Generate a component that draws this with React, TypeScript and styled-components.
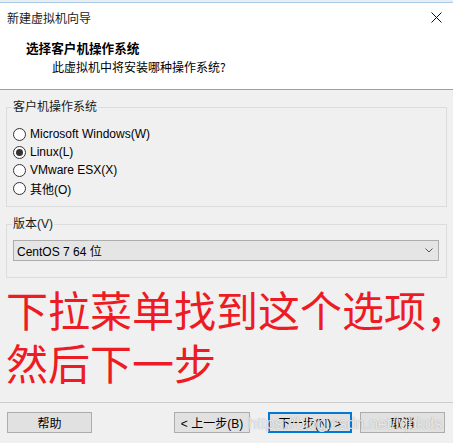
import React from 'react';
import styled, {createGlobalStyle} from 'styled-components';

const GlobalStyle = createGlobalStyle`
  html, body {
    margin: 0;
    padding: 0;
    background: #ffffff;
  }
  body {
    font-family: "Liberation Sans", "Noto Sans CJK SC", sans-serif;
    font-size: 12px;
    color: #000000;
  }
`;

const osOptions = [
  {label: 'Microsoft Windows(W)', checked: false},
  {label: 'Linux(L)', checked: true},
  {label: 'VMware ESX(X)', checked: false},
  {label: '其他(O)', checked: false},
];

export default function App() {
  return (
    <>
      <GlobalStyle/>
      <Window>
        <TopStrip/>
        <TitleBar>
          <TitleText>新建虚拟机向导</TitleText>
          <CloseButton>
            <svg width='11' height='11' viewBox='0 0 11 11'>
              <path d='M0.5 0.5 L10.5 10.5 M10.5 0.5 L0.5 10.5' stroke='#111' strokeWidth='1' fill='none'/>
            </svg>
          </CloseButton>
        </TitleBar>
        <Header>
          <HeaderTitle>选择客户机操作系统</HeaderTitle>
          <HeaderSub>此虚拟机中将安装哪种操作系统?</HeaderSub>
        </Header>
        <Content>
          <Group $pt={11} $pb={9}>
            <Legend>客户机操作系统</Legend>
            {osOptions.map((o) => (
              <RadioRow key={o.label}>
                <Radio $checked={o.checked}/>
                <span>{o.label}</span>
              </RadioRow>
            ))}
          </Group>
          <Group $pt={9} $pb={16}>
            <Legend>版本(V)</Legend>
            <Select>
              <span>CentOS 7 64 位</span>
              <svg width='8' height='5' viewBox='0 0 8 5'>
                <path d='M0.5 0.5 L4 4 L7.5 0.5' stroke='#555' strokeWidth='1' fill='none'/>
              </svg>
            </Select>
          </Group>
          <Note>
            <NoteLine>下拉菜单找到这个选项<Punct>，</Punct></NoteLine>
            <NoteLine>然后下一步</NoteLine>
          </Note>
        </Content>
        <Footer>
          <Button $w={85}>帮助</Button>
          <Spacer/>
          <Button $w={76}>&lt; 上一步(B)</Button>
          <Button $w={84} $primary style={{marginLeft: 18}}>下一步(N) &gt;</Button>
          <Button $w={85} style={{marginLeft: 8}}>取消</Button>
          <Watermark>https://blog.csdn.net/lqbkds</Watermark>
        </Footer>
      </Window>
    </>
  );
}

const Window = styled.div`
  width: 453px;
  height: 443px;
  background: #f0f0f0;
  display: flex;
  flex-direction: column;
`;

const TopStrip = styled.div`
  height: 2px;
  background: #e9eef3;
  border-bottom: 1px solid #a9c9e6;
`;

const TitleBar = styled.div`
  height: 30px;
  background: #ffffff;
  display: flex;
  align-items: center;
  padding: 0 11px 0 7px;
`;

const TitleText = styled.div`
  flex: 1;
  font-family: "Noto Sans CJK SC", sans-serif;
  font-size: 12px;
  color: #1a1a1a;
  line-height: 16px;
`;

const CloseButton = styled.div`
  display: flex;
  margin-top: -1px;
`;

const Header = styled.div`
  background: #ffffff;
  padding: 7px 0 14px 26px;
  border-bottom: 1px solid #a0a0a0;
  box-sizing: border-box;
  height: 57px;
`;

const HeaderTitle = styled.div`
  font-family: "Noto Sans CJK SC", sans-serif;
  font-weight: bold;
  font-size: 12.6px;
  line-height: 16px;
`;

const HeaderSub = styled.div`
  font-family: "Noto Sans CJK SC", sans-serif;
  font-size: 12px;
  line-height: 16px;
  margin: 3px 0 0 26px;
`;

const Content = styled.div`
  padding: 0 6px;
  display: flex;
  flex-direction: column;
`;

const Group = styled.fieldset<{$pt: number; $pb: number}>`
  margin: 10px 0 0 0;
  padding: ${(p) => p.$pt}px 7px ${(p) => p.$pb}px 6px;
  border: 1px solid #dcdcdc;
  min-width: 0;
`;

const Legend = styled.legend`
  margin-left: -1px;
  padding: 0 1px;
  font-size: 12px;
  line-height: 14px;
  color: #1a1a1a;
`;

const RadioRow = styled.div`
  height: 18px;
  display: flex;
  align-items: center;
  gap: 4px;
  font-size: 12px;
`;

const Radio = styled.span<{$checked: boolean}>`
  width: 11px;
  height: 11px;
  border: 1px solid #333333;
  border-radius: 50%;
  background: #ffffff;
  display: flex;
  align-items: center;
  justify-content: center;
  &::after {
    content: '';
    display: ${(p) => (p.$checked ? 'block' : 'none')};
    width: 7px;
    height: 7px;
    border-radius: 50%;
    background: #333333;
  }
`;

const Select = styled.div`
  height: 21px;
  box-sizing: border-box;
  border: 1px solid #adadad;
  background: #e5e5e5;
  display: flex;
  align-items: center;
  justify-content: space-between;
  padding: 0 5px 0 3px;
  font-size: 12px;
`;

const Note = styled.div`
  margin: 4px 0 0 0;
  color: #ed1c24;
  font-family: "Noto Sans CJK SC", sans-serif;
  font-size: 42px;
  line-height: 53px;
  white-space: nowrap;
`;

const NoteLine = styled.div``;

const Punct = styled.span`
  display: inline-block;
  width: 16px;
  overflow: hidden;
  vertical-align: top;
`;

const Footer = styled.div`
  position: relative;
  margin-top: auto;
  border-top: 1px solid #cdcdcd;
  padding: 9px 8px 10px 7px;
  display: flex;
  align-items: center;
`;

const Spacer = styled.div`
  flex: 1;
`;

const Button = styled.div<{$w: number; $primary?: boolean}>`
  width: ${(p) => p.$w}px;
  height: 21px;
  box-sizing: border-box;
  background: #e1e1e1;
  border: 1px solid ${(p) => (p.$primary ? '#0078d7' : '#adadad')};
  box-shadow: ${(p) => (p.$primary ? 'inset 0 0 0 1px #0078d7' : 'none')};
  display: flex;
  align-items: center;
  justify-content: center;
  font-size: 12px;
  white-space: nowrap;
`;

const Watermark = styled.div`
  position: absolute;
  left: 248px;
  top: 12px;
  font-family: "Liberation Sans", sans-serif;
  font-size: 16px;
  line-height: 18px;
  color: rgba(255, 255, 255, 0.8);
  text-shadow: 0 0 1px rgba(80, 80, 80, 0.6);
  pointer-events: none;
`;
